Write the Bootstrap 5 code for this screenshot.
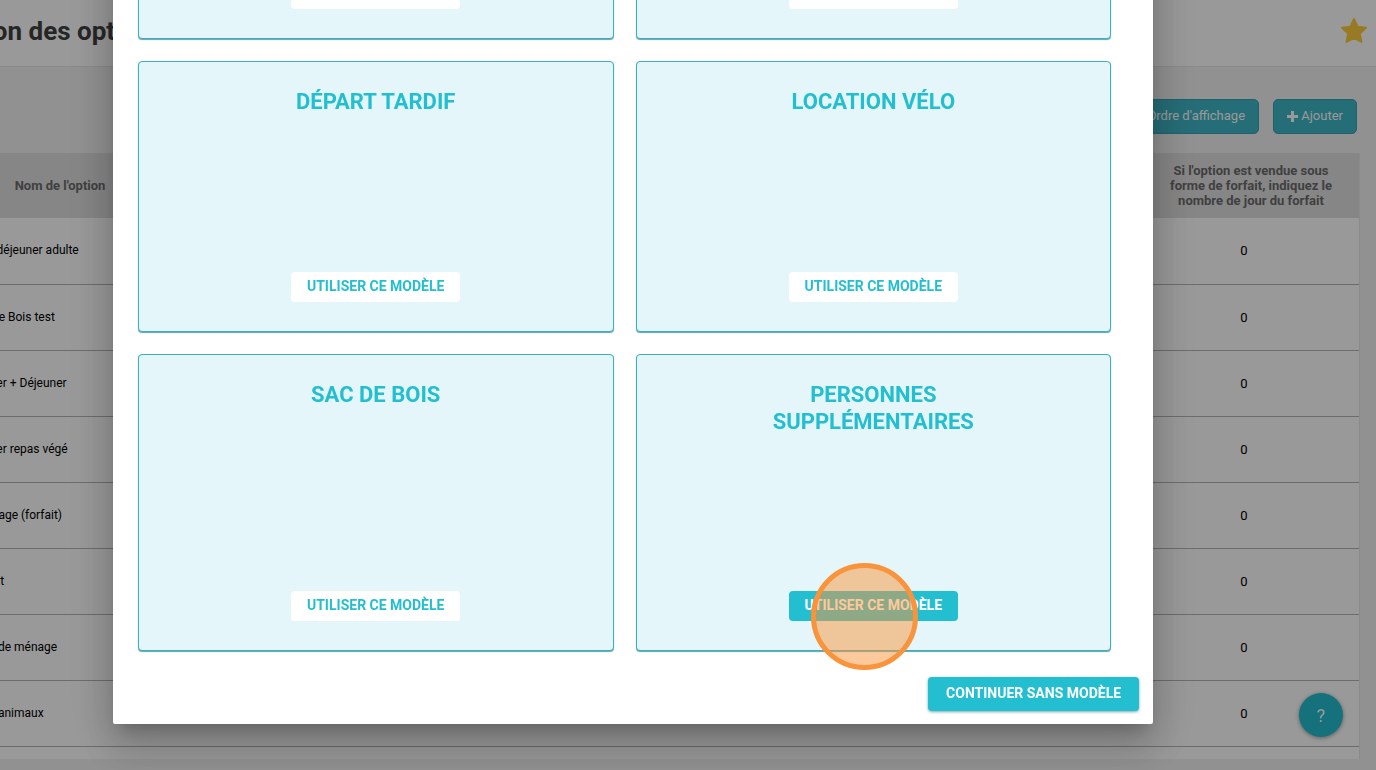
<!DOCTYPE html>
<html lang="fr">
<head>
<meta charset="utf-8">
<meta name="viewport" content="width=device-width, initial-scale=1">
<title>Gestion des options</title>
<link href="https://cdn.jsdelivr.net/npm/bootstrap@5.3.0/dist/css/bootstrap.min.css" rel="stylesheet">
<style>
:root { --brand: #23bfd0; --overhang: 110px; }
body { font-family: Roboto, "Liberation Sans", sans-serif; font-size: 12px; background: #f2f2f2; overflow: hidden; height: 100vh; }
/* the page is scrolled sideways by the overhang */
.workspace { margin-left: calc(-1 * var(--overhang)); }
.topbar { background: #fff; height: 67px; border-bottom: 1px solid #e6e6e6; padding: 0 8px 4px 42px; }
.topbar h1 { font-size: 26px; color: #404040; line-height: 32px; }
.toolbar { padding: 32px 19px 19px; gap: 14px; }
.tool-btn { background: #3fb6c6; border: 1px solid #35a3b2; color: #fff; font-size: 13px; line-height: 20px; padding: 6px 13px 7px; border-radius: 5px; }
.tool-btn:hover { background: #35a3b2; color: #fff; }
.listing { margin: 0 16px 0 69px; background: #fff; padding-bottom: 12px; border-right: 1px solid #e6e6e6; }
.listing table { --bs-table-bg: transparent; table-layout: fixed; line-height: 15px; color: #000; }
.listing th { background: #dfdfdf; color: #6b6b6b; height: 65px; border: 0; font-size: 13px; text-align: center; vertical-align: middle; }
.listing th:last-child { padding-left: 40px; padding-right: 24px; }
.listing td { height: 66px; border-bottom: 1px solid #b5b5b5; vertical-align: middle; padding: 8px 8px 8px 10px; color: #000; }
.listing td:last-child { font-size: 13px; text-align: center; }
.col-name { width: 202px; }
.col-last { width: 232px; }
.help-btn { position: fixed; right: 33px; bottom: 33px; width: 44px; height: 44px; background: var(--brand); color: #fff; font-size: 18px; box-shadow: 0 1px 4px rgba(0,0,0,.4); border: 0; }
.modal-backdrop.show { opacity: .4; }
.modal { left: calc(-1 * var(--overhang)); width: calc(100% + var(--overhang)); overflow: hidden; padding-bottom: 46px; }
.modal-dialog { width: 70%; max-width: none; margin: 0 auto; flex: none; }
.modal-content { border: 0; border-radius: 2px; box-shadow: 0 11px 15px -7px rgba(0,0,0,.2), 0 24px 38px 3px rgba(0,0,0,.14), 0 9px 46px 8px rgba(0,0,0,.12); }
.modal-body { display: grid; grid-template-columns: 1fr 1fr; gap: 22px; padding: 25px 42px 26px 25px; }
.model-tile { min-height: 271px; background: #e4f6f9; border: 1px solid #3ab0bc; border-radius: 4px; padding: 26px 80px 29px; box-shadow: 0 1px 1px rgba(0,100,120,.6); }
.model-tile h2 { font-size: 22px; line-height: 27px; color: var(--brand); font-weight: 700; margin: 0; text-transform: uppercase; text-align: center; }
.model-desc { height: 156px; }
.model-btn { background: #fff; color: var(--brand); border: 0; font-size: 14px; line-height: 20px; font-weight: 700; text-transform: uppercase; padding: 4px 16px 6px; border-radius: 4px; }
.model-btn:hover, .model-btn.chosen { background: var(--brand); color: #fff; }
.click-mark { position: absolute; left: 22px; top: -28px; width: 107px; height: 107px; border: 5px solid #f9933c; border-radius: 50%; background: rgba(249,147,60,.5); pointer-events: none; }
.modal-footer { padding: 0 14px 13px; border: 0; }
.skip-btn { background: var(--brand); color: #fff; border: 0; font-size: 14px; line-height: 20px; font-weight: 700; text-transform: uppercase; padding: 6px 18px 8px; margin: 0; border-radius: 4px; box-shadow: 0 1px 3px rgba(0,80,90,.5); }
.skip-btn:hover { background: #1ba9b9; color: #fff; }
</style>
</head>
<body>
<div class="workspace">
  <header class="topbar d-flex align-items-center justify-content-between">
    <h1 class="fw-bold m-0">Gestion des options</h1>
    <svg width="28" height="28" viewBox="0 0 28 28" aria-hidden="true"><path d="M14 2l3.6 7.700 8.400 1.100-6.200 5.800 1.600 8.400-7.400-4.100-7.400 4.100 1.600-8.400L2 10.800l8.400-1.100z" fill="#ffcc3d" stroke="#ffcc3d" stroke-width="2" stroke-linejoin="round"/></svg>
  </header>
  <div class="toolbar d-flex justify-content-end">
    <button type="button" class="btn tool-btn">Ordre d'affichage</button>
    <button type="button" class="btn tool-btn"><svg width="11" height="11" viewBox="0 0 11 11" aria-hidden="true"><path d="M4 0h3v4h4v3H7v4H4V7H0V4h4z" fill="currentColor"/></svg> Ajouter</button>
  </div>
  <div class="listing">
    <table class="table m-0">
      <colgroup><col class="col-name"><col><col class="col-last"></colgroup>
      <thead><tr><th>Nom de l'option</th><th></th><th>Si l'option est vendue sous forme de forfait, indiquez le nombre de jour du forfait</th></tr></thead>
      <tbody>
        <tr><td>Petit déjeuner adulte</td><td></td><td>0</td></tr>
        <tr><td>Sac de Bois test</td><td></td><td>0</td></tr>
        <tr><td>Souper + Déjeuner</td><td></td><td>0</td></tr>
        <tr><td>Souper repas végé</td><td></td><td>0</td></tr>
        <tr><td>Massage (forfait)</td><td></td><td>0</td></tr>
        <tr><td>Forfait</td><td></td><td>0</td></tr>
        <tr><td>Frais de ménage</td><td></td><td>0</td></tr>
        <tr><td>Frais animaux</td><td></td><td>0</td></tr>
      </tbody>
    </table>
  </div>
  <button type="button" class="help-btn rounded-circle" aria-label="Aide">?</button>
</div>

<div class="modal-backdrop show"></div>
<div class="modal show d-flex align-items-end" tabindex="-1" role="dialog" aria-label="Modèles d'option">
  <div class="modal-dialog">
    <div class="modal-content">
      <div class="modal-body">
        <section class="model-tile d-flex flex-column align-items-center"><h2>Petit déjeuner</h2><div class="model-desc"></div><button type="button" class="btn model-btn mt-auto">Utiliser ce modèle</button></section>
        <section class="model-tile d-flex flex-column align-items-center"><h2>Ménage</h2><div class="model-desc"></div><button type="button" class="btn model-btn mt-auto">Utiliser ce modèle</button></section>
        <section class="model-tile d-flex flex-column align-items-center"><h2>Départ tardif</h2><div class="model-desc"></div><button type="button" class="btn model-btn mt-auto">Utiliser ce modèle</button></section>
        <section class="model-tile d-flex flex-column align-items-center"><h2>Location vélo</h2><div class="model-desc"></div><button type="button" class="btn model-btn mt-auto">Utiliser ce modèle</button></section>
        <section class="model-tile d-flex flex-column align-items-center"><h2>Sac de bois</h2><div class="model-desc"></div><button type="button" class="btn model-btn mt-auto">Utiliser ce modèle</button></section>
        <section class="model-tile d-flex flex-column align-items-center"><h2>Personnes supplémentaires</h2><div class="model-desc"></div><div class="position-relative mt-auto"><button type="button" class="btn model-btn chosen d-block">Utiliser ce modèle</button><span class="click-mark"></span></div></section>
      </div>
      <div class="modal-footer"><button type="button" class="btn skip-btn">Continuer sans modèle</button></div>
    </div>
  </div>
</div>
<script src="https://cdn.jsdelivr.net/npm/bootstrap@5.3.0/dist/js/bootstrap.bundle.min.js"></script>
</body>
</html>
